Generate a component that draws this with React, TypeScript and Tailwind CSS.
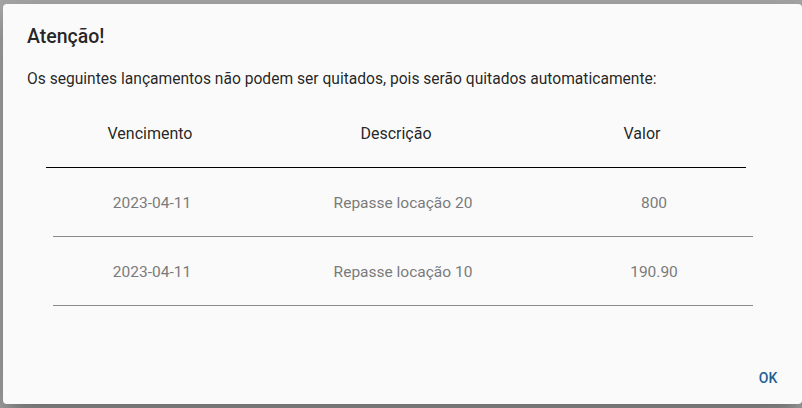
import React from "react";

const rows = [
  { date: "2023-04-11", desc: "Repasse locação 20", value: "800" },
  { date: "2023-04-11", desc: "Repasse locação 10", value: "190.90" },
];

export default function App() {
  return (
    <div
      className="w-[802px] h-[408px] overflow-hidden bg-[#a9a9a9] pl-[3px] pt-[4px]"
      style={{ fontFamily: "Roboto, 'Liberation Sans', sans-serif" }}
    >
      <div className="relative w-[799px] h-[400px] bg-[#fafafa] rounded-[4px] shadow-[0_11px_15px_-7px_rgba(0,0,0,0.2),0_24px_38px_3px_rgba(0,0,0,0.14),0_9px_46px_8px_rgba(0,0,0,0.12)] flex flex-col">
        <h2 className="mt-[17px] px-[24px] text-[19.5px] leading-[32px] font-medium text-[rgba(0,0,0,0.87)]">
          Atenção!
        </h2>
        <p className="mt-[14px] px-[24px] text-[15.6px] leading-[24px] text-[rgba(0,0,0,0.87)]">
          Os seguintes lançamentos não podem ser quitados, pois serão quitados automaticamente:
        </p>
        <div className="mt-[6px] ml-[43px] w-[700px] h-[71px] pt-[3px] grid grid-cols-[208px_284px_208px] items-center border-b border-black text-[16px] text-[rgba(0,0,0,0.87)]">
          <div className="text-center">Vencimento</div>
          <div className="text-center">Descrição</div>
          <div className="text-center">Valor</div>
        </div>
        <div className="ml-[50px] w-[700px]">
          {rows.map((r, i) => (
            <div
              key={i}
              className="h-[69px] pt-[3px] grid grid-cols-[198px_304px_198px] items-center border-b border-[#8a8a8a] text-[15.5px] text-[#7a7a7a]"
            >
              <div className="text-center">{r.date}</div>
              <div className="text-center">{r.desc}</div>
              <div className="text-center">{r.value}</div>
            </div>
          ))}
        </div>
        <div className="flex-1" />
        <div className="flex justify-end pr-[14px] pb-[8px]">
          <button className="px-[8px] h-[36px] min-w-[40px] text-[14px] font-medium uppercase text-[#1f5f93]">
            OK
          </button>
        </div>
      </div>
    </div>
  );
}
